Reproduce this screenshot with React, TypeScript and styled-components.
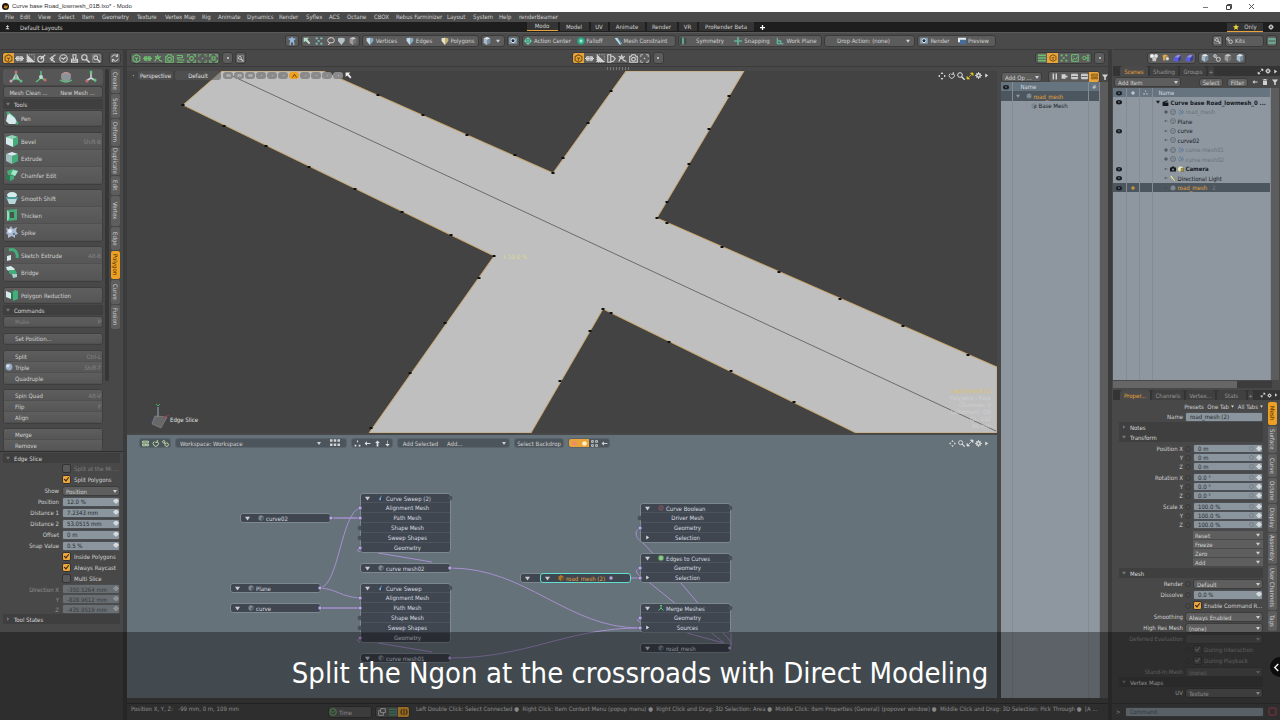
import React from 'react';
import styled, { createGlobalStyle, css } from 'styled-components';

const Global = createGlobalStyle`
  *, *::before, *::after { box-sizing: border-box; }
  html, body { margin: 0; background: #484848; }
  body { font: 6px/9px "DejaVu Sans Condensed", "DejaVu Sans", sans-serif; color: #d2d2d2; }
  button, input, select { font: inherit; color: inherit; margin: 0; }
`;

/* ---------- icons ---------- */

const glyphs: Record<string, React.ReactNode> = {
  cube: <path d="M6 1l4.500 2.500v5L6 11 1.500 8.500v-5zM4 5l2 1 2-1M6 6v3" />,
  grid: <path d="M0 6h12M4 2.500v7M8 2.500v7M2 4h8v4H2z" />,
  half: <><path d="M2 2v8h8z" fill="currentColor" /><path d="M1 1h10v10H1z" strokeWidth="1" strokeDasharray="1.500 1.500" /></>,
  pick: <><circle cx="5" cy="7" r="4" /><path d="M5 7l6-6M5 7l1-3" /></>,
  fan: <path d="M10 1L3 6l6 5M4 4l3 2-3 3" />,
  clock: <><circle cx="6" cy="6" r="5" /><path d="M3 5l3 2 3-3" /></>,
  stamp: <path d="M4 1h4v3L7 7h3v4H2V7h3L4 4zM2 9h8" />,
  find: <><path d="M1 1h10v10H1z" strokeWidth="1" strokeOpacity=".6" /><circle cx="5" cy="5" r="2.500" /><path d="M7 7l4 4" strokeWidth="2" /></>,
  refresh: <path d="M1 5a5 5 0 0 1 9-1.500M10 0v4H7M11 7a5 5 0 0 1-9 1.500M2 12V8h3" />,
  wave: <path d="M1 10l4-8 2 6 4 2M1 3l4 3 4-3" />,
  camera: <><path d="M1 3h2l1-2h4l1 2h2v8H1z" /><circle cx="6" cy="7" r="2.500" /></>,
  cameraSolid: <><path d="M0 3h3l1-2h4l1 2h3v8H0z" fill="#14181c" stroke="none" /><circle cx="6" cy="7" r="2" fill="#8e979f" stroke="none" /></>,
  coil: <path d="M1 2h7a2 2 0 0 1 0 3H4a1.500 1.500 0 0 0 0 3h7M1 5h2M1 11h9" />,
  shot: <><path d="M1 4V1h3M8 1h3v3M11 8v3H8M4 11H1V8" /><circle cx="6" cy="6" r="2.500" /></>,
  bracket: <><path d="M1 4V1h3M8 1h3v3M11 8v3H8M4 11H1V8" strokeWidth="1" /><circle cx="6" cy="6" r="1" fill="currentColor" stroke="none" /></>,
  square: <path d="M1 4V1h3M8 1h3v3M11 8v3H8M4 11H1V8M4 4h4v4H4z" />,
  dot: <circle cx="6" cy="6" r="1.500" fill="currentColor" stroke="none" />,
  bigDot: <circle cx="6" cy="6" r="4" fill="currentColor" stroke="none" />,
  tag: <path d="M1 1h4v10H1zM5 3h3l3 3-3 4H5z" />,
  windows: <path d="M4 1h7v6H4zM4 4H1v7h7V7" />,
  info: <path d="M6 1v10M3 2Q0 6 3 10M9 2q3 4 0 8" strokeWidth="2" />,
  lines: <path d="M0 2h12M0 6h12M0 10h12" strokeWidth="2.500" />,
  dots: <path d="M1 2h3M8 2h3M4 6h3M1 10h3M8 10h3" strokeWidth="2.500" />,
  image: <path d="M1 1h10v10H1zM2 10l3-4 2 2 3-4M4 3v1" />,
  node: <><circle cx="3.500" cy="6" r="2.500" /><path d="M6 6h5M9 2v8M7 2h4M7 10h4" /></>,
  chain: <><circle cx="3" cy="3" r="2" /><circle cx="8" cy="8" r="3" /><path d="M4 5l2 2" /></>,
  pieces: <><circle cx="3" cy="3" r="3" fill="#f0f0f0" stroke="none" /><circle cx="9" cy="3" r="3" fill="#dcdcdc" stroke="none" /><path d="M3 5h7l-1 6H4z" fill="#c8c8c8" stroke="none" /></>,
  move: <path d="M6 0l2 3H4zM6 12l2-3H4zM0 6l3-2v4zM12 6L9 4v4z" fill="currentColor" stroke="none" />,
  rotate: <path d="M9 2.500a4.500 4.500 0 1 1-5 0M9 0v4H5.500" strokeWidth="1.500" />,
  zoom: <><circle cx="4.500" cy="4.500" r="3.500" /><path d="M7 7l4.500 4.500" strokeWidth="2" /></>,
  expand: <path d="M7 0h5v5zM5 12H0V7zM3 9l6-6" fill="currentColor" strokeWidth="1.500" />,
  gear: <><circle cx="6" cy="6" r="3" strokeWidth="2.500" /><path d="M6 0v2M6 10v2M0 6h2M10 6h2M2 2l1 1M9 9l1 1M10 2L9 3M2 10l1-1" strokeWidth="1.500" /></>,
  right: <path d="M3 1l7 5-7 5z" fill="currentColor" stroke="none" />,
  chevronL: <path d="M9 0L3 6l6 6" strokeWidth="2.500" />,
  down: <path d="M0 2h12L6 11z" fill="currentColor" stroke="none" />,
  pause: <path d="M4 1v10M9 1v10" strokeWidth="2.500" />,
  funnel: <path d="M0 1h12L7.500 7v5h-3V7z" fill="currentColor" stroke="none" />,
  trash: <path d="M2 3h8v9H2zM4 0h4v1h3v1H1V1h3z" fill="currentColor" stroke="none" />,
  card: <path d="M1 2h7v3l3-1v4l-3-1v3H1z" fill="currentColor" stroke="none" />,
  panel: <><path d="M1 2h10v8H1z" fill="currentColor" /><path d="M1 6h10" stroke="#555" /></>,
  stack: <path d="M1 2h10v3H1zM1 7h5v3H1zM8 7h3v3H8z" strokeWidth="1.500" />,
  arrowL: <path d="M1 6l4-4v3h6v2H5v3z" fill="currentColor" stroke="none" />,
  arrowU: <path d="M6 1l4 4H7.500v6h-3V5H2z" fill="currentColor" stroke="none" />,
  arrowD: <path d="M6 11l4-4H6.500V1h-1v6H2z" fill="currentColor" stroke="none" />,
  tree: <path d="M5 1h2v3H5zM1 8h3v3H1zM8 8h3v3H8zM3 6h1M8 6h1" fill="currentColor" stroke="none" />,
  six: <path d="M0 3h3M4.500 3h3M9 3h3M0 8h3M4.500 8h3M9 8h3" strokeWidth="3" />,
  fours: <path d="M1 1h3v3H1zM8 1h3v3H8zM1 8h3v3H1zM8 8h3v3H8z" strokeWidth="1.500" />,
  plus: <path d="M6 0v12M0 6h12" strokeWidth="3" />,
  up: <path d="M6 0l4 5H7v3h3v2H2V8h3V5H2z" fill="currentColor" stroke="none" />,
  star: <path d="M6 0l1.700 4L12 4.500 8.800 7.400 9.700 12 6 9.500 2.300 12l.9-4.600L0 4.500 4.300 4z" fill="currentColor" stroke="none" />,
  eye: <><ellipse cx="6" cy="6.500" rx="6" ry="4.500" fill="currentColor" stroke="none" /><circle cx="6" cy="6" r="1.500" fill="#8e979f" stroke="none" /></>,
  person: <path d="M1 3h10M6 0v7M4 3v4l-1 5M8 3v4l1 5M4 7h4" strokeWidth="2" />,
  cursor: <path d="M1 1h8L6.500 3.500 11 9l-2 2-5-5L1 8z" fill="currentColor" stroke="none" />,
  lasso: <><ellipse cx="6" cy="5" rx="5" ry="4" /><path d="M4 9l-2 3" /></>,
  target: <><circle cx="6" cy="6" r="4" /><path d="M6 0v12M0 6h12" /></>,
  glow: <><circle cx="6" cy="6" r="6" fill="#2f8a72" stroke="none" /><circle cx="6" cy="6" r="4" fill="#4ec2a0" stroke="none" /><circle cx="6" cy="6" r="1.500" fill="#c8fbe6" stroke="none" /></>,
  shield: <><path d="M1 2l5-1 5 1v4l-5 6-5-6z" fill="#86a9bd" stroke="none" /><path d="M1 2l5-1v11L1 6z" fill="#c3d8e2" stroke="none" /></>,
  shieldY: <><path d="M1 2l5-1 5 1v4l-5 6-5-6z" fill="#c8b16a" stroke="none" /><path d="M1 2l5-1v11L1 6z" fill="#dfe2d8" stroke="none" /></>,
  shieldW: <path d="M0 2l5-1 5 1v4l-5 6-5-6z" fill="#b4c2c8" stroke="none" />,
  solid: <><path d="M6 0l5 2-5 2.500L1 2z" fill="#dfe9f2" stroke="none" /><path d="M1 2l5 2.500V12L1 9z" fill="#a9bccb" stroke="none" /><path d="M11 2v7l-5 3V4.500z" fill="#788fa2" stroke="none" /></>,
  solidGray: <><path d="M6 0l5 2-5 2.500L1 2z" fill="#c6c6c6" stroke="none" /><path d="M1 2l5 2.500V12L1 9z" fill="#9c9c9c" stroke="none" /><path d="M11 2v7l-5 3V4.500z" fill="#747474" stroke="none" /></>,
  solidBlue: <><path d="M7 1l5 1-4 4-6-1z" fill="#8b8df0" stroke="none" /><path d="M2 5l6 1v6l-8-2z" fill="#5a5de0" stroke="none" /><path d="M12 2v6l-4 4V6z" fill="#3a3aa0" stroke="none" /></>,
  box: <><circle cx="6" cy="6" r="5" fill="#8f9aa3" stroke="#5a646c" /><path d="M6 6v5M2 4l4 2 4-2" stroke="#5a646c" strokeWidth="1" /></>,
  boxDark: <><path d="M6 0l5 3v6l-5 3-5-3V3z" fill="#7b868e" stroke="none" /><path d="M6 6l5-3v6l-5 3z" fill="#545e66" stroke="none" /></>,
  boxHot: <><path d="M6 0l5 3v6l-5 3-5-3V3z" fill="#b07828" stroke="none" /><path d="M6 6l5-3v6l-5 3z" fill="#7a5420" stroke="none" /></>,
  link: <><circle cx="6" cy="6" r="4.500" stroke="#4f6f96" strokeDasharray="5 2" /><path d="M5 4l3 2-3 2" stroke="#4f6f96" /></>,
  clap: <path d="M1 5l9-3v2L4 6h7v6H1z" fill="#14181c" stroke="none" />,
  lock: <><circle cx="5" cy="6" r="5" fill="#efe9b0" stroke="none" /><path d="M6 5h5v6H6z" fill="#b0a040" stroke="#554" strokeWidth="1" /></>,
  paint: <><path d="M1 2q5-3 9 2l-3 5-5 1z" fill="#dca64c" stroke="none" /><circle cx="8" cy="7" r="3" fill="#d8dde2" stroke="#555" strokeWidth="1" /></>,
  light: <><path d="M1 1l4 2 6 8-2 1-7-7z" fill="#dfe6a0" stroke="none" /><path d="M5 3l6 8" stroke="#6b7350" /></>,
  curve: <><path d="M8 0L5 12l-1-3-3 1z" fill="#78b8e8" stroke="none" /><path d="M8 0l2 8-4 4z" fill="#335" stroke="none" /></>,
  ring: <><circle cx="6" cy="6" r="4.500" stroke="#a05a64" /><path d="M3 9l6-6" stroke="#a05a64" /></>,
  ball: <circle cx="6" cy="6" r="5.500" fill="#8fc88a" stroke="#4d7a50" />,
  merge: <path d="M6 1v5L1 11M6 6l5 5M4 2l2-2 2 2" stroke="#58c77e" strokeWidth="2" />,
  caret: <path d="M1 11l5-8 5 8" strokeWidth="2" />,
  symmetry: <><path d="M5 1h2v10H5z" fill="#6fc0a8" stroke="none" /><path d="M1 1h3v10H1zM8 1h3v10H8z" fill="#3c4d48" stroke="none" /></>,
  snap: <path d="M6 0v12M0 6h12" stroke="#62b298" strokeWidth="2.500" />,
  plane: <path d="M2 1v9h9M2 6h5v4" stroke="#62b298" strokeWidth="2" />,
  bend: <><path d="M1 2l4-1 7 8-3 3z" fill="#b9dcea" stroke="none" /><path d="M5 1l7 8-2 1z" fill="#3f7f98" stroke="none" /></>,
  screen: <><path d="M0 1h12v9H0z" fill="#7d93a6" stroke="none" /><circle cx="6" cy="5.500" r="3" fill="#1d2b3c" stroke="#dfe8f0" /></>,
  film: <><path d="M0 1h12v7H0z" fill="#e4ecf4" stroke="none" /><path d="M3 4h9v7H3z" fill="#476e9a" stroke="none" /></>,
};

const Svg = styled.svg<{ $s: number; $c?: string }>`
  width: ${p => p.$s}px;
  height: ${p => p.$s}px;
  flex: none;
  display: block;
  overflow: visible;
  color: ${p => p.$c ?? 'inherit'};
`;
const Icon = ({ n, s = 8, c }: { n: string; s?: number; c?: string }) => (
  <Svg $s={s} $c={c} viewBox="0 0 12 12" fill="none" stroke="currentColor" strokeWidth="1.5" aria-hidden="true">{glyphs[n]}</Svg>
);

const ToolSvg = styled.svg`
  width: 14px;
  height: 14px;
  flex: none;
  display: block;
`;
const white = '#d6ecec';
const green = '#45ad78';
const dark = '#2b7a55';
const toolArt: Record<string, React.ReactNode> = {
  pen: <><path d="M3 1l7 6 3 6-9 0-3-3z" fill={white} /><path d="M3 1l7 6" stroke="#5fd0b0" /><circle cx="3" cy="2" r="1.500" fill={green} /><circle cx="12" cy="12" r="1.500" fill={green} /></>,
  bevel: <><path d="M1 3l6-2 6 2-5 2z" fill="#8ad8b4" /><path d="M1 3l7 2v8l-7-3z" fill={white} /><path d="M13 3v7l-5 3V5z" fill={green} /></>,
  extrude: <><path d="M1 3l6-2 6 2-6 2z" fill={white} /><path d="M1 3l6 2v8l-6-3z" fill="#9cc0bd" /><path d="M13 3v7l-6 3V5z" fill={green} /></>,
  chamfer: <><path d="M2 3l6-2 5 2-3 5-7-1z" fill={green} /><path d="M8 2l5 1-3 5-4-2z" fill="#a5e6c8" /><path d="M1 7l4 1v5l-4-2z" fill={dark} /><path d="M5 8l4-1v4l-4 2z" fill={green} /></>,
  smooth: <><ellipse cx="7" cy="4" rx="5" ry="3" fill={white} /><path d="M1 6h12v2H1z" fill="#4f9d9d" /><path d="M2 8h10l-2 5H4z" fill="#b9d6d8" /></>,
  thicken: <><path d="M2 2l10-1v11l-10 1z" fill={green} /><path d="M5 4l4 0v6l-4 0z" fill="#4c5250" /><path d="M2 2l2 2v7l-2 2z" fill="#8fe0b8" /></>,
  spike: <><path d="M1 3l3 1 2-3 2 3 4-2-1 4 2 3-3 1 0 3-3-2-4 2 0-3-2-2 1-2z" fill="#a9b9cf" /><circle cx="5" cy="6" r="2" fill="#e4ecf8" /><circle cx="9" cy="9" r="1" fill="#50607c" /></>,
  sketch: <><path d="M4 2c6-2 9 3 8 8" stroke={green} strokeWidth="3" fill="none" /><path d="M2 8l4-1v5l-4 1z" fill={white} /></>,
  bridge: <><path d="M1 2l5-1 4 3-3 3-5-2z" fill={white} /><path d="M4 5l6 0 2 3-3 3-5-3z" fill={green} /><path d="M7 9l5 0 0 3-4 1z" fill="#a9cdd0" /></>,
  reduce: <><path d="M1 3l5 2v6l-5-2z" fill={white} /><path d="M6 5l4-3 3 1v8l-5 2v-4l-2 1z" fill={green} /><path d="M6 5l2-1v6l-2 1z" fill={dark} /></>,
  ball: <><circle cx="7" cy="7" r="6" fill="#98abc4" /><circle cx="5" cy="5" r="3" fill="#d3deec" /></>,
};

const gadgetArt = [
  <><path d="M8 3l4 8H4z" fill="#b9c4ca" /><path d="M8 2v9M3 12l5-2 5 2" stroke="#4cb070" fill="none" /><circle cx="8" cy="3" r="1.500" fill="#c86e6e" /><circle cx="3" cy="12" r="1.500" fill="#d0a0c0" /><circle cx="13" cy="12" r="1.500" fill="#5ec07a" /></>,
  <><path d="M8 2v7l-5 4M8 9l5 2" stroke="#59c47a" strokeWidth="1.500" fill="none" /><circle cx="8" cy="8" r="2" fill="#c9d2d8" /><circle cx="12" cy="11" r="1.500" fill="#c86e6e" /></>,
  <><ellipse cx="8" cy="8" rx="5" ry="5" fill="#8b9499" /><path d="M3 6q5-5 10 0" stroke="#cc8f96" fill="none" /><path d="M2 11q6 4 12 0" stroke="#59c47a" strokeWidth="1.500" fill="none" /></>,
  <><path d="M8 2v7l-5 3M8 9l5 3" stroke="#cfd6dc" strokeWidth="1.500" fill="none" /><circle cx="8" cy="3" r="1.500" fill="#59c47a" /><circle cx="12" cy="11" r="1.500" fill="#59c47a" /><circle cx="4" cy="12" r="1.500" fill="#c86e6e" /></>,
];

/* ---------- shared parts ---------- */

const Shell = styled.div`
  position: relative;
  min-height: 100vh;
  display: flex;
  flex-direction: column;
  overflow: hidden;
  background: #484848;
  white-space: nowrap;
`;
const Group = styled.div`
  display: flex;
  align-items: center;
  height: 12px;
  border: 1px solid #3a3a3a;
  border-radius: 3px;
  background: #5c5c5c;
  overflow: hidden;
`;
const Btn = styled.button<{ $w?: number; $on?: boolean; $c?: string }>`
  display: flex;
  align-items: center;
  justify-content: center;
  gap: 2px;
  height: 100%;
  padding: 0;
  border: 0;
  flex: ${p => (p.$w ? 'none' : '1')};
  width: ${p => (p.$w ? p.$w + 'px' : 'auto')};
  background: ${p => (p.$on ? '#e8a33a' : 'transparent')};
  color: ${p => (p.$on ? '#7a5410' : p.$c ?? '#d2d2d2')};
`;
const Bare = styled(Btn)`
  width: 14px;
  flex: none;
  background: none;
`;
const Select = styled.span<{ $w?: number; $plain?: boolean; $dim?: boolean }>`
  position: relative;
  display: flex;
  height: 10px;
  flex: ${p => (p.$w ? 'none' : '1')};
  width: ${p => (p.$w ? p.$w + 'px' : 'auto')};
  min-width: 0;
  opacity: ${p => (p.$dim ? 0.4 : 1)};
  select {
    appearance: none;
    width: 100%;
    padding: 0 8px 0 3px;
    border: 1px solid #3c3c3c;
    border-radius: 3px;
    background: #5e5e5e;
    ${p => p.$plain && css`border-color: transparent; background: transparent;`}
  }
  &::after {
    content: '';
    position: absolute;
    right: 3px;
    top: 4px;
    border: 2px solid transparent;
    border-top: 3px solid #d0d0d0;
    border-bottom: 0;
    pointer-events: none;
  }
`;
const Choice = ({ label, value, w, plain, dim }: { label: string; value: string; w?: number; plain?: boolean; dim?: boolean }) => (
  <Select $w={w} $plain={plain} $dim={dim}>
    <select aria-label={label} defaultValue={value}><option>{value}</option></select>
  </Select>
);
const Tick = styled.input.attrs({ type: 'checkbox' })`
  appearance: none;
  width: 9px;
  height: 9px;
  flex: none;
  border-radius: 2px;
  background: #5a5a5a;
  border: 1px solid #333;
  &:checked { background: #eda63c; }
  &:checked::after {
    content: '';
    display: block;
    width: 3px;
    height: 5px;
    margin: 0 0 0 2px;
    border: solid #33240c;
    border-width: 0 1px 1px 0;
    transform: rotate(40deg);
  }
  &:disabled { background: #5a5a5a; }
  &:disabled::after { border-color: #d0d0d0; }
`;

/* ---------- top bars ---------- */

const TitleBar = styled.header`
  height: 12px;
  display: flex;
  align-items: center;
  gap: 3px;
  padding: 0 20px 0 2px;
  background: #fff;
  color: #333;
  font: 6px/11px "Liberation Sans", sans-serif;
`;
const Logo = styled.svg`
  width: 7px;
  height: 7px;
`;
const Grow = styled.span`
  flex: 1;
`;
const WinBtns = styled.div`
  display: flex;
  gap: 14px;
  svg { width: 9px; height: 9px; display: block; }
  button { border: 0; padding: 0; background: none; }
  padding-right: 4px;
`;
const MenuBar = styled.nav`
  height: 10px;
  display: flex;
  align-items: center;
  padding-left: 5px;
  background: #4a4a4a;
  line-height: 10px;
`;
const MenuItem = styled.button<{ $w: number }>`
  width: ${p => p.$w}px;
  padding: 0;
  border: 0;
  background: none;
  text-align: left;
`;
const LayoutBar = styled.nav`
  height: 10px;
  display: grid;
  grid-template-columns: 1fr auto 1fr;
  align-items: center;
  background: #1e1e1e;
`;
const LayoutLeft = styled.div`
  display: flex;
  align-items: center;
  gap: 10px;
  padding-left: 5px;
`;
const LayoutTabs = styled.div`
  display: flex;
  gap: 2px;
  padding-left: 16px;
  height: 100%;
`;
const LayoutTab = styled.button<{ $w: number; $on?: boolean }>`
  width: ${p => p.$w}px;
  height: 9px;
  padding: 0;
  border: 0;
  border-bottom: ${p => (p.$on ? '1px solid #e8a33a' : '0')};
  background: #343434;
  line-height: 8px;
`;
const LayoutRight = styled.div`
  display: flex;
  justify-content: flex-end;
  align-items: center;
  gap: 5px;
  padding-right: 6px;
`;
const Only = styled.button`
  display: flex;
  align-items: center;
  justify-content: center;
  gap: 5px;
  width: 36px;
  height: 9px;
  padding: 0;
  border: 0;
  border-bottom: 1px solid #e8a33a;
  background: #343434;
`;
const MainBar = styled.div`
  height: 17px;
  display: grid;
  grid-template-columns: 1fr auto 1fr;
  align-items: center;
  padding-bottom: 1px;
  background: #4a4a4a;
  border-top: 1px solid #5a5a5a;
`;
const BarItems = styled.div<{ $end?: boolean }>`
  display: flex;
  align-items: center;
  gap: 2px;
  justify-content: ${p => (p.$end ? 'flex-end' : 'center')};
  padding-right: ${p => (p.$end ? '3px' : '0')};
`;

const menus: [string, number][] = [['File', 15], ['Edit', 18], ['View', 20], ['Select', 24], ['Item', 20], ['Geometry', 35], ['Texture', 28], ['Vertex Map', 37], ['Rig', 16], ['Animate', 29], ['Dynamics', 32], ['Render', 27], ['Syflex', 23], ['ACS', 18], ['Octane', 27], ['CBOX', 22], ['Rebus Farminizer', 51], ['Layout', 26], ['System', 26], ['Help', 20], ['renderBeamer', 44]];
const layouts: [string, number][] = [['Modo', 31], ['Model', 29], ['UV', 17], ['Animate', 35], ['Render', 30], ['VR', 18], ['ProRender Beta', 55]];

const TopBars = () => (
  <>
    <TitleBar>
      <Logo viewBox="0 0 12 12"><circle cx="6" cy="6" r="6" fill="#1f1508" /><path d="M3 8l2-5 2 3 2-3 1 4-3 3z" fill="#d08a2c" /></Logo>
      Curve base Road_lowmesh_01B.lxo* - Modo
      <Grow />
      <WinBtns>
        <button aria-label="Minimise"><svg viewBox="0 0 9 9" stroke="#777" fill="none"><path d="M2 5.500h5" /></svg></button>
        <button aria-label="Restore"><svg viewBox="0 0 9 9" stroke="#444" fill="none"><path d="M2.500 3.500h4v4h-4zM3.500 3.500v-1h4v4h-1" /></svg></button>
        <button aria-label="Close"><svg viewBox="0 0 9 9" stroke="#555" fill="none"><path d="M2 2l5 5M7 2L2 7" /></svg></button>
      </WinBtns>
    </TitleBar>
    <MenuBar>{menus.map(([m, w]) => <MenuItem key={m} $w={w}>{m}</MenuItem>)}</MenuBar>
    <LayoutBar>
      <LayoutLeft><Icon n="up" s={5} />Default Layouts</LayoutLeft>
      <LayoutTabs>
        {layouts.map(([m, w], i) => <LayoutTab key={m} $w={w} $on={i === 0}>{m}</LayoutTab>)}
        <Bare aria-label="Add layout" $c="#fff"><Icon n="plus" s={5} /></Bare>
      </LayoutTabs>
      <LayoutRight><Only><Icon n="star" s={6} c="#e8d23a" />Only</Only><Icon n="gear" s={6} /></LayoutRight>
    </LayoutBar>
    <MainBar>
      <span />
      <BarItems>
        <Group><Btn $w={12} aria-label="Figure" $c="#8fb8dc"><Icon n="person" /></Btn></Group>
        <Group>
          <Btn $w={11} aria-label="Select" $c="#b8dccc"><Icon n="cursor" /></Btn>
          <Btn $w={12} aria-label="Paint" $c="#7fc8c8"><Icon n="dots" /></Btn>
          <Btn $w={12} aria-label="Lasso"><Icon n="lasso" /></Btn>
          <Btn $w={11} aria-label="Solid"><Icon n="shieldW" /></Btn>
          <Btn $w={11} aria-label="Through"><Icon n="solidGray" /></Btn>
        </Group>
        <Group>
          <Btn $w={38}><Icon n="shield" />Vertices</Btn>
          <Btn $w={37}><Icon n="shield" />Edges</Btn>
          <Btn $w={40}><Icon n="shieldY" />Polygons</Btn>
        </Group>
        <Group><Btn $w={11} aria-label="Items"><Icon n="solid" /></Btn><Btn $w={11} aria-label="More"><Icon n="down" s={4} /></Btn></Group>
        <Group><Btn $w={11} aria-label="Centers"><Icon n="screen" /></Btn></Group>
        <Group>
          <Btn $w={50}><Icon n="target" c="#5fd0a8" />Action Center</Btn>
          <Btn $w={34}><Icon n="glow" />Falloff</Btn>
          <Btn $w={68}><Icon n="bend" />Mesh Constraint</Btn>
        </Group>
        <Group>
          <Btn $w={53}><Icon n="symmetry" /><Grow>Symmetry</Grow></Btn>
          <Btn $w={41}><Icon n="snap" />Snapping</Btn>
          <Btn $w={48}><Icon n="plane" />Work Plane</Btn>
        </Group>
        <Group><Btn $w={78}>Drop Action: (none)</Btn><Btn $w={11} aria-label="Drop actions"><Icon n="down" s={4} /></Btn></Group>
        <Group><Btn $w={35}><Icon n="screen" />Render</Btn><Btn $w={42}><Icon n="film" />Preview</Btn></Group>
      </BarItems>
      <BarItems $end>
        <Group><Btn $w={9} aria-label="Find"><Icon n="find" s={7} /></Btn></Group>
        <Group><Btn $w={37}><Icon n="chain" s={7} />Kits<Grow /></Btn></Group>
        <Group><Btn $w={9} aria-label="Side bar"><Icon n="panel" s={8} c="#6fa890" /></Btn></Group>
      </BarItems>
    </MainBar>
  </>
);

/* ---------- left column ---------- */

const Work = styled.div`
  flex: 1;
  display: grid;
  grid-template-columns: 127px minmax(0, 1fr) 168px;
`;
const LeftCol = styled.aside`
  display: flex;
  flex-direction: column;
  border-right: 4px solid #3b3b3b;
  background: #484848;
`;
const IconRow = styled.div<{ $pad?: string }>`
  display: flex;
  align-items: center;
  gap: 2px;
  height: 17px;
  padding: ${p => p.$pad ?? '0 3px'};
  border-top: 1px solid #3a3a3a;
`;
const ToolArea = styled.div`
  display: flex;
  gap: 2px;
  height: 386px;
  padding: 2px 3px 0;
  border-top: 1px solid #333;
  border-bottom: 1px solid #2e2e2e;
  overflow: hidden;
`;
const ToolCol = styled.div`
  width: 102px;
  display: flex;
  flex-direction: column;
`;
const Block = styled.div<{ $mt: number }>`
  flex: none;
  margin-top: ${p => p.$mt}px;
  border: 1px solid #3e3e3e;
  border-radius: 3px;
  overflow: hidden;
  background: #5a5a5a;
`;
const Tool = styled.button<{ $h: number; $dim?: boolean }>`
  display: flex;
  align-items: center;
  gap: 2px;
  width: 100%;
  height: ${p => p.$h}px;
  padding: 0 1px;
  border: 0;
  border-bottom: 1px solid #505050;
  background: linear-gradient(#5e5e5e, #565656);
  color: ${p => (p.$dim ? '#808080' : '#d2d2d2')};
  text-align: left;
`;
const Key = styled.span`
  margin-left: auto;
  color: #868686;
`;
const IconSlot = styled.span<{ $w: number }>`
  width: ${p => p.$w}px;
  display: flex;
  justify-content: center;
  flex: none;
  svg { max-width: 100%; max-height: 100%; }
`;
const Gadgets = styled.div`
  display: grid;
  grid-template-columns: repeat(4, 1fr);
  height: 18px;
  border-radius: 3px;
  background: #565656;
  svg { width: 16px; height: 16px; }
`;
const Pair = styled.div`
  display: grid;
  grid-template-columns: 1fr 1fr;
  height: 10px;
`;
const Section = styled.h3<{ $mt?: number }>`
  display: flex;
  align-items: center;
  gap: 4px;
  flex: none;
  height: 10px;
  margin: ${p => p.$mt ?? 0}px 0 0;
  padding: 0 3px;
  background: #3f3f3f;
  color: #dadada;
  font: inherit;
`;
const Track = styled.div`
  width: 4px;
  height: 312px;
  border-radius: 2px;
  background: #363636;
`;
const VTabs = styled.div`
  display: flex;
  flex-direction: column;
  gap: 1px;
  width: 9px;
  flex: none;
`;
const VTab = styled.button<{ $h: number; $on?: boolean }>`
  writing-mode: vertical-rl;
  flex: none;
  height: ${p => p.$h}px;
  width: 9px;
  padding: 0;
  border: 0;
  border-radius: 2px;
  background: ${p => (p.$on ? '#eda022' : '#5e5e5e')};
  color: ${p => (p.$on ? '#3a2a08' : '#cecece')};
  line-height: 9px;
  text-align: center;
`;
const Form = styled.div`
  display: flex;
  flex-direction: column;
  padding: 1px 3px 0;
`;
const Row = styled.label<{ $h?: number; $dim?: boolean }>`
  display: grid;
  grid-template-columns: 56px minmax(0, 1fr);
  align-items: center;
  gap: 3px;
  height: ${p => p.$h ?? 11}px;
  opacity: ${p => (p.$dim ? 0.5 : 1)};
  text-align: right;
`;
const CheckRow = styled.label<{ $dim?: boolean }>`
  display: flex;
  align-items: center;
  gap: 3px;
  height: 11px;
  padding-left: 59px;
  overflow: hidden;
  color: ${p => (p.$dim ? '#808080' : 'inherit')};
`;
const Field = styled.span<{ $h?: number; $spin?: boolean; $ring?: boolean }>`
  position: relative;
  display: flex;
  flex: 1;
  min-width: 0;
  height: ${p => p.$h ?? 10}px;
  input {
    width: 100%;
    padding: 0 4px;
    border: 1px solid #4c5054;
    border-radius: 2px;
    background: #8b959d;
    color: #23292f;
  }
  input::placeholder { color: #4a535a; opacity: 1; }
  ${p => p.$spin && css`
    &::after {
      content: '';
      position: absolute;
      right: 1px;
      top: 2px;
      width: 6px;
      height: 5px;
      background: #d4dade;
      clip-path: polygon(0 50%, 40% 0, 60% 0, 100% 50%, 60% 100%, 40% 100%);
    }
  `}
  ${p => p.$ring && css`
    &::before {
      content: '';
      position: absolute;
      right: 9px;
      top: 2px;
      width: 5px;
      height: 5px;
      border: 1px solid #747e86;
      border-radius: 50%;
    }
  `}
`;

const toolBlocks: { mt: number; h: number; items: [string, string, string?][] }[] = [
  { mt: 1, h: 15, items: [['pen', 'Pen']] },
  { mt: 5, h: 17, items: [['bevel', 'Bevel', 'Shift-B'], ['extrude', 'Extrude'], ['chamfer', 'Chamfer Edit']] },
  { mt: 4, h: 17, items: [['smooth', 'Smooth Shift'], ['thicken', 'Thicken'], ['spike', 'Spike']] },
  { mt: 4, h: 17, items: [['sketch', 'Sketch Extrude', 'Alt-B'], ['bridge', 'Bridge']] },
  { mt: 5, h: 15, items: [['reduce', 'Polygon Reduction']] },
];
const commandBlocks: { mt: number; items: [string, string?, boolean?][] }[] = [
  { mt: 1, items: [['Make', 'P', true]] },
  { mt: 5, items: [['Set Position...']] },
  { mt: 5, items: [['Split', 'Ctrl-L'], ['Triple', 'Shift-T'], ['Quadruple']] },
  { mt: 4, items: [['Spin Quad', 'Alt-V'], ['Flip', 'F'], ['Align']] },
  { mt: 4, items: [['Merge'], ['Remove']] },
];
const leftTabs: [string, number][] = [['Create', 24], ['Select', 24], ['Deform', 27], ['Duplicate', 28], ['Edit', 19], ['Vertex', 30], ['Edge', 23], ['Polygon', 28], ['Curve', 24], ['Fusion', 24]];

const LeftPanel = () => (
  <LeftCol>
    <IconRow $pad="0 2px">
      <Group>
        {['cube', 'grid', 'half', 'pick', 'fan', 'clock', 'stamp', 'zoom', 'find'].map((n, i) => (
          <Btn key={n} $w={11} $on={i === 0} aria-label={n}><Icon n={n} s={9} /></Btn>
        ))}
      </Group>
      <Grow />
      <Group><Btn $w={10} aria-label="Refresh"><Icon n="refresh" s={8} /></Btn></Group>
    </IconRow>
    <ToolArea>
      <ToolCol>
        <Gadgets>
          {gadgetArt.map((a, i) => <Btn key={i} aria-label={'Gadget ' + (i + 1)}><svg viewBox="0 0 16 16">{a}</svg></Btn>)}
        </Gadgets>
        <Block $mt={1}><Pair><Btn>Mesh Clean ...</Btn><Btn>New Mesh ...</Btn></Pair></Block>
        <Section $mt={1}><Icon n="down" s={4} c="#777" />Tools</Section>
        {toolBlocks.map((b, i) => (
          <Block key={i} $mt={b.mt}>
            {b.items.map(([art, label, key]) => (
              <Tool key={label} $h={b.h}>
                <IconSlot $w={14}><ToolSvg viewBox="0 0 14 14">{toolArt[art]}</ToolSvg></IconSlot>{label}{key && <Key>{key}</Key>}
              </Tool>
            ))}
          </Block>
        ))}
        <Section $mt={1}><Icon n="down" s={4} c="#777" />Commands</Section>
        {commandBlocks.map((b, i) => (
          <Block key={i} $mt={b.mt}>
            {b.items.map(([label, key, dim]) => (
              <Tool key={label} $h={b.items.length > 1 ? 11 : 10} $dim={dim}>
                <IconSlot $w={8}>{label === 'Triple' && <ToolSvg viewBox="0 0 14 14">{toolArt.ball}</ToolSvg>}</IconSlot>{label}{key && <Key>{key}</Key>}
              </Tool>
            ))}
          </Block>
        ))}
      </ToolCol>
      <Track />
      <VTabs>{leftTabs.map(([t, h]) => <VTab key={t} $h={h} $on={t === 'Polygon'}>{t}</VTab>)}</VTabs>
    </ToolArea>
    <Form>
      <Section><Icon n="down" s={4} c="#777" />Edge Slice</Section>
      <CheckRow $dim><Tick disabled />Split at the Mi ...</CheckRow>
      <CheckRow><Tick defaultChecked />Split Polygons</CheckRow>
      <Row as="div">Show<Choice label="Show" value="Position" /></Row>
      {[['Position', '12.0 %'], ['Distance 1', '7.2343 mm'], ['Distance 2', '53.0515 mm'], ['Offset', '0 m'], ['Snap Value', '0.5 %']].map(([l, v]) => (
        <Row key={l}>{l}<Field $spin><input defaultValue={v} /></Field></Row>
      ))}
      <CheckRow><Tick defaultChecked />Inside Polygons</CheckRow>
      <CheckRow><Tick defaultChecked />Always Raycast</CheckRow>
      <CheckRow><Tick />Multi Slice</CheckRow>
      {[['Direction X', '-350.5264 mm'], ['Y', '-828.9612 mm'], ['Z', '-435.9519 mm']].map(([l, v]) => (
        <Row key={l} $h={10} $dim>{l}<Field $spin><input defaultValue={v} disabled /></Field></Row>
      ))}
      <Section><Icon n="right" s={4} c="#777" />Tool States</Section>
    </Form>
  </LeftCol>
);

/* ---------- centre ---------- */

const Center = styled.main`
  display: flex;
  flex-direction: column;
  min-width: 0;
  border-right: 4px solid #3b3b3b;
`;
const ThreeWay = styled.div`
  height: 17px;
  display: grid;
  grid-template-columns: 1fr auto 1fr;
  align-items: center;
  padding: 0 3px;
  border-top: 1px solid #3a3a3a;
`;
const Side = styled.div<{ $end?: boolean }>`
  display: flex;
  gap: 2px;
  justify-content: ${p => (p.$end ? 'flex-end' : 'flex-start')};
`;
const Grip = styled.div`
  height: 5px;
  display: flex;
  justify-content: center;
  gap: 2px;
  border-top: 1px solid #3c3c3c;
  i { width: 1px; height: 3px; background: #777; }
`;
const Stage = styled.div`
  flex: 1;
  display: grid;
  grid-template-columns: minmax(0, 1fr) 107px;
  gap: 4px;
  padding-bottom: 5px;
`;
const Views = styled.div`
  display: grid;
  grid-template-rows: 362fr 263fr;
  gap: 2px;
  min-height: 0;
`;
const Viewport = styled.section`
  position: relative;
  overflow: hidden;
  background: #434343;
`;
const Scene = styled.svg`
  position: absolute;
  inset: 0;
  width: 100%;
  height: 100%;
`;
const ViewBar = styled.div`
  position: relative;
  display: flex;
  align-items: center;
  height: 9px;
  padding: 0 8px 0 4px;
  gap: 2px;
`;
const ViewBtn = styled.button<{ $w: number }>`
  width: ${p => p.$w}px;
  height: 9px;
  padding: 0;
  border: 0;
  border-radius: 3px;
  background: rgba(90, 90, 90, 0.55);
  color: #e0e0e0;
`;
const Pill = styled.button<{ $on?: boolean }>`
  display: flex;
  align-items: center;
  justify-content: center;
  width: 10px;
  height: 7px;
  padding: 0;
  border: 0;
  border-radius: 3px;
  background: ${p => (p.$on ? '#f0a020' : '#8a8a8a')};
  color: ${p => (p.$on ? '#5a3800' : '#b8b8b8')};
`;
const Pills = styled.div`
  display: flex;
  gap: 1px;
`;
const ViewIcons = styled.div`
  display: flex;
  gap: 2px;
  margin-left: auto;
  align-items: center;
  color: #e0e0e0;
`;
const Readout = styled.div`
  position: absolute;
  right: 6px;
  bottom: 4px;
  color: #cdd0d4;
  line-height: 7px;
  text-align: right;
  b { color: #e2bf62; font-weight: normal; display: block; }
`;

const dotsAt: [number, number][] = [[183, 105], [224, 126], [266, 146], [309, 167], [355, 189], [402, 212], [451, 235], [494, 256], [479, 278], [445, 323], [410, 373], [371, 428], [378, 95], [423, 115], [467, 135], [515, 155], [553, 173], [563, 158], [588, 123], [611, 91], [729, 96], [709, 129], [689, 164], [667, 202], [657, 218], [667, 223], [722, 247], [779, 272], [840, 299], [903, 326], [968, 355], [603, 309], [611, 313], [669, 342], [731, 371], [794, 402], [590, 331], [560, 381]];

const Scene3D = () => (
  <Viewport>
    <Scene viewBox="127 71 870 362" preserveAspectRatio="xMidYMid slice">
      <path d="M222 71H323L553 173 626 71H744L657 218 997 367V433H856L603 309 531 433H369L494 256 183 105z" fill="#bfbfbf" stroke="#c9a566" strokeWidth="1" />
      <path d="M228 74L996 431" stroke="#555" strokeWidth=".8" />
      {dotsAt.map(([x, y]) => <rect key={x + '-' + y} x={x - 1.5} y={y - 1} width="3" height="2" fill="#111" />)}
      <path d="M158 417v-10" stroke="#9ab" strokeWidth="1" />
      <path d="M156 404l2 2 2-2" stroke="#4caa6c" fill="none" />
      <path d="M151 422l4-6 5 2-3 6z" fill="#3d4a8c" />
      <path d="M155 416l12 1-6 11-9-4z" fill="#686868" stroke="#999" strokeWidth=".5" />
      <path d="M163 418l6-3" stroke="#a04048" />
      <text x="170" y="422" fill="#e6e6e6" fontSize="6">Edge Slice</text>
      <text x="502" y="259" fill="#dcdc8c" fontSize="6">+ 12.0 %</text>
    </Scene>
    <ViewBar>
      <Icon n="dot" s={5} c="#aaa" />
      <ViewBtn $w={35}>Perspective</ViewBtn>
      <ViewBtn $w={46}>Default</ViewBtn>
      <Pills>{Array.from({ length: 11 }, (_, i) => <Pill key={i} $on={i === 6} aria-label={'Shading ' + (i + 1)}><Icon n={i === 6 ? 'caret' : i < 3 ? 'grid' : 'dot'} s={5} /></Pill>)}</Pills>
      <Icon n="cursor" s={7} c="#eee" />
      <ViewIcons>
        <Icon n="move" /><Icon n="rotate" s={7} /><Icon n="zoom" s={8} /><Icon n="expand" s={6} c="#e0c820" /><Icon n="gear" s={7} /><Icon n="right" s={5} />
      </ViewIcons>
    </ViewBar>
    <Readout><b>road_mesh (2)</b>Polygons : Face<br />Channels: 0<br />Deformers: ON<br />GL: 192<br />50 mm</Readout>
  </Viewport>
);

const Graph = styled.section`
  position: relative;
  overflow: hidden;
  background: #66727a;
`;
const GraphBar = styled.div`
  position: relative;
  display: flex;
  align-items: center;
  gap: 4px;
  height: 16px;
  padding: 0 8px 0 12px;
`;
const DarkGroup = styled(Group)`
  height: 10px;
  background: #4c555c;
  border-color: #59636b;
`;
const Wires = styled.svg`
  position: absolute;
  left: 0;
  top: 0;
  width: 870px;
  height: 264px;
  pointer-events: none;
`;
const NodeBox = styled.article<{ $x: number; $y: number; $hot?: boolean }>`
  position: absolute;
  left: ${p => p.$x}px;
  top: ${p => p.$y}px;
  width: 91px;
  border: 1px solid ${p => (p.$hot ? '#5fe0d0' : '#7d8890')};
  border-radius: 3px;
  background: #3f464f;
  color: ${p => (p.$hot ? '#e8a33a' : '#d8dce0')};
`;
const NodeHead = styled.h4`
  display: flex;
  align-items: center;
  gap: 2px;
  height: 8px;
  margin: 0;
  padding-left: 4px;
  font: inherit;
`;
const NodeRow = styled.div`
  position: relative;
  height: 10px;
  padding-left: 4px;
  border-top: 1px solid #4b535c;
  text-align: center;
  svg { position: absolute; left: 4px; top: 2px; }
`;
type NodeData = { x: number; y: number; t: string; icon: string; rows?: string[]; hot?: boolean };
const sweepRows = ['Alignment Mesh', 'Path Mesh', 'Shape Mesh', 'Sweep Shapes', 'Geometry'];
const nodes: NodeData[] = [
  { x: 113, y: 78, t: 'curve02', icon: 'boxDark' },
  { x: 103, y: 148, t: 'Plane', icon: 'boxDark' },
  { x: 103, y: 168, t: 'curve', icon: 'boxDark' },
  { x: 233, y: 58, t: 'Curve Sweep (2)', icon: 'curve', rows: sweepRows },
  { x: 233, y: 128, t: 'curve mesh02', icon: 'boxDark' },
  { x: 233, y: 148, t: 'Curve Sweep', icon: 'curve', rows: sweepRows },
  { x: 233, y: 218, t: 'curve mesh01', icon: 'boxDark' },
  { x: 393, y: 138, t: '', icon: '' },
  { x: 413, y: 138, t: 'road_mesh (2)', icon: 'boxHot', hot: true },
  { x: 513, y: 68, t: 'Curve Boolean', icon: 'ring', rows: ['Driver Mesh', 'Geometry', '>Selection'] },
  { x: 513, y: 118, t: 'Edges to Curves', icon: 'ball', rows: ['Geometry', '>Selection'] },
  { x: 513, y: 168, t: 'Merge Meshes', icon: 'merge', rows: ['Geometry', '>Sources'] },
  { x: 513, y: 208, t: 'road_mesh', icon: 'boxDark' },
];
const ports: [number, number, boolean][] = [[204, 83, true], [193, 153, true], [193, 173, true], [323, 133, true], [323, 223, true], [233, 73, true], [233, 83, true], [233, 93, false], [233, 103, false], [233, 113, true], [323, 63, false], [323, 153, false], [233, 163, true], [233, 173, true], [233, 183, false], [233, 193, false], [233, 203, true], [484, 143, true], [513, 83, false], [513, 93, true], [603, 73, false], [603, 123, false], [603, 173, false], [513, 133, true], [513, 143, true], [513, 183, true], [513, 193, true], [603, 213, true]];

const NodeGraph = () => (
  <Graph>
    <Wires fill="none" stroke="#a68fd0">
      <path d="M204 83H233M193 173H233" strokeWidth="1.500" />
      <path d="M193 153C212 150 214 78 233 73M193 153C210 154 214 162 233 163" />
      <path d="M323 133C400 133 440 193 513 193M323 223C400 223 440 193 513 193" />
      <path d="M251 118L305 127M251 208L305 217M233 113q-5 2 0 4M233 203q-5 2 0 4" />
      <path d="M513 93C506 96 509 104 516 108L554 148 596 198C602 204 606 208 603 213" />
      <path d="M513 133C506 136 509 139 523 148L560 178 602 212M604 198v14M513 183q-5 2 0 4M503 143h10" />
      <path d="M560 198L600 209" />
    </Wires>
    <GraphBar>
      <DarkGroup>{['stack', 'rotate', 'chain'].map(n => <Btn key={n} $w={10} aria-label={n} $c="#c8e8b0"><Icon n={n} s={7} /></Btn>)}</DarkGroup>
      <DarkGroup><Choice label="Workspace" value="Workspace: Workspace" w={148} plain /><Btn $w={22} aria-label="Layout"><Icon n="six" s={10} /></Btn></DarkGroup>
      <DarkGroup>{['tree', 'arrowL', 'arrowU', 'arrowD'].map(n => <Btn key={n} $w={10} aria-label={n} $c="#e0e0e0"><Icon n={n} s={7} /></Btn>)}</DarkGroup>
      <DarkGroup><Btn $w={45}>Add Selected</Btn><Choice label="Add" value="Add..." w={66} plain /></DarkGroup>
      <DarkGroup><Btn $w={48}>Select Backdrop</Btn></DarkGroup>
      <DarkGroup>
        <Btn $w={10} $on aria-label="Backdrop colour"><Icon n="bigDot" s={7} c="#f08a6a" /></Btn>
        <Btn $w={10} $on aria-label="Backdrop light"><Icon n="bigDot" s={7} c="#fff0c0" /></Btn>
        <Btn $w={10} aria-label="Snap"><Icon n="fours" s={7} /></Btn>
        <Btn $w={10} aria-label="Back"><Icon n="arrowL" s={7} /></Btn>
      </DarkGroup>
      <ViewIcons><Icon n="move" s={7} /><Icon n="zoom" s={7} /><Icon n="expand" s={6} /><Icon n="gear" s={7} /><Icon n="right" s={5} /></ViewIcons>
    </GraphBar>
    {nodes.map((n, i) => (
      <NodeBox key={i} $x={n.x} $y={n.y} $hot={n.hot}>
        <NodeHead><Icon n="down" s={5} c="#c8ccd0" /><IconSlot $w={4} />{n.icon && <Icon n={n.icon} s={6} />}{n.t}</NodeHead>
        {n.rows?.map(r => <NodeRow key={r}>{r[0] === '>' && <Icon n="right" s={5} />}{r.replace('>', '')}</NodeRow>)}
      </NodeBox>
    ))}
    <Wires>
      {ports.map(([x, y, on], i) => <circle key={i} cx={x} cy={y} r="2" fill={on ? '#b8a4e0' : '#4a525b'} stroke="#39404a" strokeWidth=".5" />)}
    </Wires>
  </Graph>
);

/* ---------- item lists ---------- */

const OpsPanel = styled.section`
  display: flex;
  flex-direction: column;
  min-width: 0;
`;
const OpsBar = styled.div`
  display: flex;
  align-items: center;
  gap: 2px;
  height: 11px;
`;
const ListFrame = styled.div`
  flex: 1;
  display: flex;
  min-height: 0;
  border-right: 8px solid #5c5c5c;
  background: #8e979f;
`;
const List = styled.table`
  width: 100%;
  height: 100%;
  border-collapse: collapse;
  table-layout: fixed;
  th, td { padding: 0; border-right: 1px solid #838c94; text-align: left; font-weight: inherit; line-height: 9px; overflow: hidden; }
  th { background: #65747e; color: #d4dce2; }
  tr { height: 9px; }
  tbody tr:nth-child(odd) { height: 10px; }
  tbody tr:last-child { height: auto; }
`;
const Col = styled.col<{ $w?: number }>`
  width: ${p => (p.$w ? p.$w + 'px' : 'auto')};
`;
const ListRow = styled.tr<{ $hot?: boolean; $dim?: boolean; $bold?: boolean }>`
  background: ${p => (p.$hot ? '#4c565e' : 'transparent')};
  color: ${p => (p.$hot ? '#e8a33a' : p.$dim ? '#69727a' : '#151a1f')};
  font-weight: ${p => (p.$bold ? 700 : 400)};
`;
const Cell = styled.span<{ $in: number }>`
  display: flex;
  align-items: center;
  gap: 2px;
  height: 9px;
  padding-left: ${p => p.$in}px;
`;
const Count = styled.span`
  margin-left: 3px;
  color: #78828a;
`;

const Ops = () => (
  <OpsPanel>
    <OpsBar>
      <Choice label="Add operator" value="Add Op ..." w={41} />
      <Grow />
      <Group>{['pause', 'card', 'panel', 'panel', 'stack'].map((n, i) => <Btn key={i} $w={10} $on={i === 4} aria-label={n}><Icon n={n} s={7} /></Btn>)}</Group>
      <Icon n="funnel" s={6} />
    </OpsBar>
    <ListFrame>
      <List>
        <colgroup><Col $w={11} /><Col /><Col $w={11} /></colgroup>
        <thead><tr><th><Cell $in={2}><Icon n="eye" s={6} c="#1a1f24" /></Cell></th><th><Cell $in={8}>Name</Cell></th><th><Cell $in={3}>#</Cell></th></tr></thead>
        <tbody>
          <ListRow $hot><td /><td><Cell $in={3}><Icon n="down" s={4} c="#999" /><IconSlot $w={2} /><Icon n="box" s={6} />road_mesh</Cell></td><td /></ListRow>
          <ListRow><td /><td><Cell $in={18}><Icon n="boxDark" s={6} />Base Mesh</Cell></td><td /></ListRow>
          <tr><td /><td /><td /></tr>
        </tbody>
      </List>
    </ListFrame>
  </OpsPanel>
);

const StatusBar = styled.footer`
  height: 17px;
  display: flex;
  align-items: center;
  gap: 3px;
  padding: 0 2px 0 1px;
  border-top: 1px solid #333;
  overflow: hidden;
`;
const StatusText = styled.span<{ $w?: number }>`
  flex: ${p => (p.$w ? 'none' : '1')};
  width: ${p => (p.$w ? p.$w + 'px' : 'auto')};
  padding: 0 0 7px 3px;
  overflow: hidden;
  text-overflow: ellipsis;
`;

/* ---------- right column ---------- */

const RightCol = styled.aside`
  display: flex;
  flex-direction: column;
  min-width: 0;
  padding-left: 1px;
`;
const Tabs = styled.div`
  display: flex;
  align-items: center;
  gap: 2px;
  height: 10px;
  padding: 0 2px 0 7px;
  background: #343434;
`;
const Tab = styled.button<{ $w: number; $on?: boolean }>`
  width: ${p => p.$w}px;
  height: 10px;
  padding: 0;
  border: 0;
  border-radius: 3px 3px 0 0;
  background: ${p => (p.$on ? '#4a4a4a' : '#404040')};
  color: ${p => (p.$on ? '#e8a33a' : '#989898')};
`;
const SceneBar = styled.div`
  display: flex;
  align-items: center;
  gap: 4px;
  height: 12px;
  padding: 0 2px 0 1px;
`;
const SmallBtn = styled.button<{ $w: number }>`
  width: ${p => p.$w}px;
  height: 9px;
  padding: 0;
  border: 1px solid #3c3c3c;
  border-radius: 3px;
  background: #626262;
  line-height: 7px;
`;
const SceneList = styled(ListFrame)`
  margin-right: 1px;
`;
const HTrack = styled.div`
  height: 7px;
  margin: 1px 8px 2px 0;
  background: linear-gradient(90deg, #666 78%, #3c3c3c 0);
`;
const Props = styled.div`
  height: 330px;
  display: flex;
  flex-direction: column;
`;
const PropBody = styled.div`
  flex: 1;
  display: flex;
  gap: 5px;
  padding: 2px 3px 0 6px;
`;
const PropForm = styled.div`
  flex: 1;
  min-width: 0;
  display: flex;
  flex-direction: column;
`;
const PropRow = styled.label<{ $h?: number; $dim?: boolean; $mt?: number }>`
  display: grid;
  grid-template-columns: 64px minmax(0, 1fr);
  gap: 2px;
  align-items: center;
  flex: none;
  height: ${p => p.$h ?? 11}px;
  margin-top: ${p => p.$mt ?? 0}px;
  text-align: right;
  opacity: ${p => (p.$dim ? 0.5 : 1)};
`;
const Control = styled.span`
  display: flex;
  align-items: center;
  gap: 2px;
  min-width: 0;
  overflow: hidden;
`;
const KeyDot = styled.i`
  width: 6px;
  height: 6px;
  flex: none;
  border-radius: 50%;
  border: 1px solid #3a3a3a;
`;
const Menus = styled.div`
  display: flex;
  flex-direction: column;
  flex: none;
  margin: 2px 0 1px 74px;
`;
const MenuPick = styled.button`
  display: flex;
  align-items: center;
  justify-content: space-between;
  height: 9px;
  padding: 0 3px 0 2px;
  border: 0;
  border-bottom: 1px solid #4a4a4a;
  background: #5e5e5e;
`;
const Presets = styled.div`
  display: flex;
  justify-content: flex-end;
  align-items: center;
  gap: 2px;
  height: 9px;
`;
const CommandBar = styled.label`
  display: flex;
  align-items: center;
  gap: 4px;
  height: 17px;
  padding: 0 3px 1px 3px;
  border-top: 1px solid #3a3a3a;
`;
const Record = styled.button`
  width: 9px;
  height: 9px;
  padding: 0;
  border: 2px solid #8a4a54;
  border-radius: 3px;
  background: none;
`;

type Item = { t: string; icon: string; dim?: boolean; eye?: boolean; link?: boolean; bold?: boolean; hot?: boolean };
const items: Item[] = [
  { t: 'road_mesh', icon: 'box', dim: true, link: true },
  { t: 'Plane', icon: 'box' },
  { t: 'curve', icon: 'box', eye: true },
  { t: 'curve02', icon: 'box' },
  { t: 'curve mesh01', icon: 'box', dim: true, link: true },
  { t: 'curve mesh02', icon: 'box', dim: true, link: true },
  { t: 'Camera', icon: 'cameraSolid', eye: true, bold: true },
  { t: 'Directional Light', icon: 'light', eye: true },
  { t: 'road_mesh', icon: 'box', eye: true, hot: true },
];
const rightTabs: [string, number][] = [['Mesh', 23], ['Surface', 27], ['Curve', 23], ['Octane', 25], ['Display', 28], ['Assembly', 31], ['User Channels', 45], ['Tags', 20]];
const axes: [string, string][] = [['Position', '0 m'], ['Rotation', '0.0 °'], ['Scale', '100.0 %']];

const RightPanel = () => (
  <RightCol>
    <IconRow $pad="0 0 0 34px">
      <Group>
        <Btn $w={12} aria-label="Mesh"><Icon n="pieces" /></Btn><Btn $w={11} aria-label="Material"><Icon n="paint" /></Btn>
        <Btn $w={12} aria-label="Blue 1"><Icon n="solidBlue" /></Btn><Btn $w={12} aria-label="Blue 2"><Icon n="solidBlue" /></Btn>
      </Group>
      <Group>
        <Btn $w={12} aria-label="Locate"><Icon n="solid" /></Btn><Btn $w={11} aria-label="Chain"><Icon n="chain" /></Btn><Btn $w={12} aria-label="Chain 2"><Icon n="solidGray" /></Btn>
        <Btn $w={11} aria-label="Layer"><Icon n="solid" /></Btn>
      </Group>
    </IconRow>
    <Tabs>
      <Tab $w={28} $on>Scenes</Tab><Tab $w={28}>Shading</Tab><Tab $w={26}>Groups</Tab><Tab $w={6}>+</Tab>
      <Grow /><Icon n="expand" s={5} /><Icon n="gear" s={6} /><Icon n="right" s={5} />
    </Tabs>
    <SceneBar>
      <Choice label="Add item" value="Add Item" w={67} /><Grow /><SmallBtn $w={24}>Select</SmallBtn><SmallBtn $w={21}>Filter</SmallBtn>
      <Icon n="arrowL" s={6} /><Icon n="trash" s={6} /><Icon n="funnel" s={6} />
    </SceneBar>
    <SceneList>
      <List>
        <colgroup><Col $w={13} /><Col $w={13} /><Col $w={13} /><Col /></colgroup>
        <thead><tr><th><Cell $in={3}><Icon n="eye" s={6} c="#1a1f24" /></Cell></th><th><Cell $in={4}><Icon n="plus" s={4} /></Cell></th><th><Cell $in={3}><Icon n="tree" s={5} /></Cell></th><th><Cell $in={6}>Name</Cell></th></tr></thead>
        <tbody>
          <ListRow $bold><td><Cell $in={3}><Icon n="eye" s={6} /></Cell></td><td /><td /><td><Cell $in={3}><Icon n="down" s={4} /><Icon n="clap" s={7} />Curve base Road_lowmesh_0 ...</Cell></td></ListRow>
          {items.map((it, i) => (
            <ListRow key={i} $hot={it.hot} $dim={it.dim} $bold={it.bold}>
              <td>{it.eye && <Cell $in={3}><Icon n="eye" s={6} c="#1a1f24" /></Cell>}</td>
              <td>{it.hot && <Cell $in={4}><Icon n="plus" s={4} /></Cell>}</td>
              <td />
              <td><Cell $in={11}><Icon n={it.dim ? 'plus' : 'arrowL'} s={4} c="#444b52" /><Icon n={it.icon} s={6} />{it.link && <Icon n="link" s={6} />}{it.bold && <Icon n="lock" s={6} />}{it.t}{it.hot && <Count>2</Count>}</Cell></td>
            </ListRow>
          ))}
          <tr><td /><td /><td /><td /></tr>
        </tbody>
      </List>
    </SceneList>
    <HTrack />
    <Props>
      <Tabs>
        <Tab $w={30} $on>Proper...</Tab><Tab $w={32}>Channels</Tab><Tab $w={29}>Vertex...</Tab><Tab $w={29}>Stats</Tab><Tab $w={5}>+</Tab>
        <Grow /><Icon n="expand" s={4} /><Icon n="gear" s={5} /><Icon n="right" s={4} />
      </Tabs>
      <PropBody>
        <PropForm>
          <Presets>Presets&nbsp; One Tab<Icon n="down" s={3} />&nbsp;All Tabs<Icon n="down" s={3} /></Presets>
          <PropRow $h={11}>Name<Field><input defaultValue="road_mesh (2)" /></Field></PropRow>
          <Section><Icon n="right" s={4} c="#777" />Notes</Section>
          <Section><Icon n="down" s={4} c="#777" />Transform</Section>
          {axes.map(([name, v], k) => ['X', 'Y', 'Z'].map((a, i) => (
            <PropRow key={name + a} $h={9} $mt={i > 0 ? 0 : 2}>{i === 0 ? name + ' X' : a}<Control><KeyDot /><Field $h={9} $spin $ring><input defaultValue={v} /></Field></Control></PropRow>
          )))}
          <Menus>{['Reset', 'Freeze', 'Zero', 'Add'].map(m => <MenuPick key={m}>{m}<Icon n="down" s={4} /></MenuPick>)}</Menus>
          <Section><Icon n="down" s={4} c="#777" />Mesh</Section>
          <PropRow as="div">Render<Control><KeyDot /><Choice label="Render" value="Default" /></Control></PropRow>
          <PropRow>Dissolve<Control><KeyDot /><Field $spin><input defaultValue="0.0 %" /></Field></Control></PropRow>
          <PropRow><span /><Control><KeyDot /><Tick defaultChecked />Enable Command R...</Control></PropRow>
          <PropRow as="div">Smoothing<Choice label="Smoothing" value="Always Enabled" /></PropRow>
          <PropRow as="div">High Res Mesh<Choice label="High Res Mesh" value="(none)" /></PropRow>
          <PropRow as="div" $dim>Deferred Evaluation<Choice label="Deferred Evaluation" value=" " /></PropRow>
          <PropRow $dim><span /><Control><KeyDot /><Tick disabled defaultChecked />During Interaction</Control></PropRow>
          <PropRow $dim><span /><Control><KeyDot /><Tick disabled defaultChecked />During Playback</Control></PropRow>
          <PropRow as="div" $dim>Stand-In Mesh<Choice label="Stand-In Mesh" value="(none)" /></PropRow>
          <Section><Icon n="down" s={4} c="#777" />Vertex Maps</Section>
          <PropRow as="div">UV<Choice label="UV" value="Texture" /></PropRow>
        </PropForm>
        <VTabs>{rightTabs.map(([t, h]) => <VTab key={t} $h={h} $on={t === 'Mesh'}>{t}</VTab>)}</VTabs>
      </PropBody>
      <CommandBar>&gt;<Field><input aria-label="Command" placeholder="Command" /></Field><Record aria-label="Record" /></CommandBar>
    </Props>
  </RightCol>
);

/* ---------- caption ---------- */

const Caption = styled.div`
  position: absolute;
  left: 0;
  right: 0;
  bottom: 0;
  height: 88px;
  padding-top: 23px;
  background: rgba(0, 0, 0, 0.35);
  color: #fff;
  font: 29px/36px "DejaVu Sans Condensed", "DejaVu Sans", sans-serif;
  text-align: center;
  pointer-events: none;
`;
const Collapse = styled.button`
  position: absolute;
  right: 0;
  bottom: 43px;
  display: flex;
  align-items: center;
  justify-content: flex-end;
  width: 10px;
  height: 20px;
  padding: 0;
  border: 0;
  border-radius: 10px 0 0 10px;
  background: #0c0c0c;
  color: #eee;
`;

export default function App() {
  return (
    <Shell>
      <Global />
      <TopBars />
      <Work>
        <LeftPanel />
        <Center>
          <ThreeWay>
            <Side>
              <Group>{['cube', 'grid', 'wave', 'camera', 'coil', 'shot', 'bracket', 'square'].map(n => <Btn key={n} $w={11} $c="#6cc070" aria-label={n}><Icon n={n} s={9} /></Btn>)}</Group>
              <Group><Btn $w={9} aria-label="Add"><Icon n="dot" /></Btn></Group>
              <Group><Btn $w={9} aria-label="Find"><Icon n="find" s={7} /></Btn></Group>
            </Side>
            <Side>
              <Group>{['cube', 'grid', 'half', 'tag', 'wave', 'camera', 'bracket'].map((n, i) => <Btn key={n} $w={11} $on={i === 0} aria-label={n}><Icon n={n} s={9} /></Btn>)}</Group>
              <Group><Btn $w={9} aria-label="Add"><Icon n="dot" /></Btn></Group>
            </Side>
            <Side $end>
              <Group>{['lines', 'cube', 'dots', 'image', 'node'].map((n, i) => <Btn key={n} $w={11} $c="#6cc070" $on={i === 1} aria-label={n}><Icon n={n} s={8} /></Btn>)}</Group>
              <Group><Btn $w={9} aria-label="Add"><Icon n="dot" /></Btn></Group>
            </Side>
          </ThreeWay>
          <Grip>{Array.from({ length: 8 }, (_, i) => <i key={i} />)}</Grip>
          <Stage>
            <Views><Scene3D /><NodeGraph /></Views>
            <Ops />
          </Stage>
          <StatusBar>
            <StatusText $w={197}>Position X, Y, Z: &nbsp; -99 mm, 0 m, 109 mm</StatusText>
            <Group><Btn $w={42}><Icon n="clock" c="#6cc070" />Time<Grow /></Btn></Group>
            <Group><Btn $w={11} aria-label="Windows"><Icon n="windows" /></Btn><Btn $w={11} aria-label="Log"><Icon n="lines" c="#5a9a78" /></Btn><Btn $w={11} $on aria-label="Info"><Icon n="info" /></Btn></Group>
            <StatusText>Left Double Click: Select Connected ●&nbsp; Right Click: Item Context Menu (popup menu) ●&nbsp; Right Click and Drag: 3D Selection: Area ●&nbsp; Middle Click: Item Properties (General) (popover window) ●&nbsp; Middle Click and Drag: 3D Selection: Pick Through ●&nbsp; [A ...</StatusText>
          </StatusBar>
        </Center>
        <RightPanel />
      </Work>
      <Caption>Split the Ngon at the crossroads with Direct Modeling</Caption>
      <Collapse aria-label="Collapse"><Icon n="chevronL" s={7} /></Collapse>
    </Shell>
  );
}
